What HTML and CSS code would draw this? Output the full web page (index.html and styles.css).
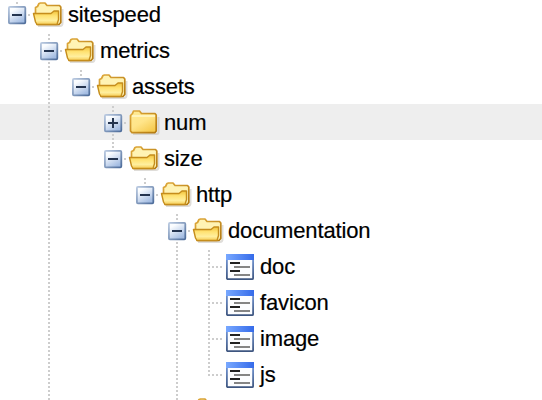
FILE: index.html
```html
<!DOCTYPE html>
<html lang="en">
<head>
<meta charset="utf-8">
<title>Metrics tree</title>
<link rel="stylesheet" href="styles.css">
</head>
<body>
<svg class="defs" width="0" height="0" aria-hidden="true">
  <defs>
    <linearGradient id="btn" x1="0" y1="0" x2=".6" y2="1"><stop offset=".25" stop-color="#fbfdff"/><stop offset="1" stop-color="#a3bce2"/></linearGradient>
    <linearGradient id="edge" x1="0" y1="0" x2="1" y2="1"><stop offset="0" stop-color="#b9c9e0"/><stop offset="1" stop-color="#4d6c9a"/></linearGradient>
    <linearGradient id="gold" x1="0" y1="0" x2=".7" y2="1"><stop offset="0" stop-color="#ffeb94"/><stop offset=".55" stop-color="#ffe58a"/><stop offset="1" stop-color="#f6cb50"/></linearGradient>
    <linearGradient id="front" x1="0" y1="0" x2="0" y2="1"><stop offset="0" stop-color="#f0c23c"/><stop offset=".35" stop-color="#ffe272"/><stop offset=".7" stop-color="#ffef9e"/><stop offset="1" stop-color="#f5cb52"/></linearGradient>
    <linearGradient id="rim" x1="0" y1="0" x2="1" y2="1"><stop offset="0" stop-color="#dfa93c"/><stop offset="1" stop-color="#b37a10"/></linearGradient>
    <linearGradient id="bar" x1="0" y1="0" x2="1" y2="0"><stop offset="0" stop-color="#78a8ff"/><stop offset="1" stop-color="#356bea"/></linearGradient>
    <linearGradient id="frame" x1="0" y1="0" x2="0" y2="1"><stop offset="0" stop-color="#7aa0e3"/><stop offset="1" stop-color="#3e5680"/></linearGradient>
    <g id="minus">
      <rect x="8.9" y="10.9" width="16.4" height="16.4" rx="1" fill="url(#btn)" stroke="url(#edge)" stroke-width="1.8"/>
      <path d="M12 19h10" stroke="#24344f" stroke-width="2"/>
    </g>
    <g id="plus"><use href="#minus"/><path d="M17 14v10" stroke="#24344f" stroke-width="2"/></g>
    <g id="open">
      <path d="M6 30H28Q30.5 30 30.5 27V13" fill="none" stroke="#b9b4aa" stroke-opacity=".45" stroke-width="2"/>
      <path d="M3.5 18V11.5L5.5 10.5L7 7.5L8.5 7H13L15 9.5H27.5L28.800 11V26.5L27 28.500H5Z" fill="#fff3b4" stroke="url(#rim)" stroke-width="1.7" stroke-linejoin="round"/>
      <path d="M1.500 17.500H19L22 15H26.500V23.500L25 28.500H5L3.500 26Z" fill="url(#front)" stroke="#c58d1c" stroke-width="1.4" stroke-linejoin="round"/>
    </g>
    <g id="closed">
      <path d="M5 30H29Q30.5 30 30.5 28V13" fill="none" stroke="#b9b4aa" stroke-opacity=".45" stroke-width="2"/>
      <path d="M2.5 11.500L4.5 9.500L5.500 7H11.500L13.500 9.500H27L28.200 11V27L27 28.600H4L2.500 27Z" fill="url(#gold)" stroke="url(#rim)" stroke-width="1.7" stroke-linejoin="round"/>
      <path d="M4 12H27" fill="none" stroke="#fff8cc" stroke-width="1.5"/>
    </g>
    <g id="page">
      <rect x="2.9" y="6.8" width="26.2" height="24.4" rx="1" fill="#fcfdff" stroke="url(#frame)" stroke-width="1.8"/>
      <path d="M2 6h28v6H2z" fill="url(#bar)"/>
      <path d="M6 15h10M6 23h10" stroke="#222" stroke-width="2.2"/>
      <path d="M10 19h16M10 27h16" stroke="#858585" stroke-width="2"/>
    </g>
  </defs>
</svg>
<main id="tree" class="tree" role="tree"></main>
<script src="tree.js"></script>
</body>
</html>
```
FILE: styles.css
```css
body {
  margin: 0;
  background: #fff;
  color: #000;
  font: 22px/38px "Liberation Sans", Arial, sans-serif;
}
.defs { position: absolute; }
.tree {
  display: flex;
  flex-direction: column;
  height: 400px;
  overflow: hidden;
}
.row { display: flex; flex: none; height: 36px; }
.row:first-child { margin-top: -4px; }
.row.selected { background: #eee; }
.cell { flex: none; width: 32px; height: 36px; overflow: visible; }
.dots { stroke: #cdcdcd; stroke-width: 2; stroke-dasharray: 2 2; fill: none; }
.label {
  margin-left: 4px;
  white-space: nowrap;
  letter-spacing: -0.15px;
  -webkit-text-stroke: 0.2px #000;
}
```
FILE: tree.js
```js
// Cells: "." empty, "|" guide, "t" branch, "l" last branch,
// "-" last toggle, "=" toggle with siblings below, "+" collapsed toggle
const rows = [
  ["-", "open", "sitespeed"],
  [".=", "open", "metrics"],
  [".|-", "open", "assets"],
  [".|.+", "closed", "num", true],
  [".|.-", "open", "size"],
  [".|..-", "open", "http"],
  [".|...=", "open", "documentation"],
  [".|...|t", "page", "doc"],
  [".|...|t", "page", "favicon"],
  [".|...|t", "page", "image"],
  [".|...|l", "page", "js"],
  [".|...=", "open", ""]
];
const line = d => `<path class="dots" d="${d}"/>`;
const full = line("M17 2V36");
const above = line("M17 2V9");
const below = line("M17 30V36");
const stub = line("M28 19H30");
const branch = line("M20 19H30");
const cells = {
  ".": "",
  "|": full,
  "t": full + branch,
  "l": line("M17 2V20") + branch,
  "-": above + stub + '<use href="#minus"/>',
  "=": above + below + stub + '<use href="#minus"/>',
  "+": above + below + stub + '<use href="#plus"/>'
};
const svg = body => `<svg class="cell" viewBox="0 0 32 36">${body}</svg>`;
document.getElementById("tree").innerHTML = rows.map(([guides, icon, label, selected]) =>
  `<div class="row${selected ? " selected" : ""}" role="treeitem">` +
  [...guides].map(c => svg(cells[c])).join("") +
  svg(`<use href="#${icon}"/>`) +
  `<span class="label">${label}</span></div>`).join("");
```
